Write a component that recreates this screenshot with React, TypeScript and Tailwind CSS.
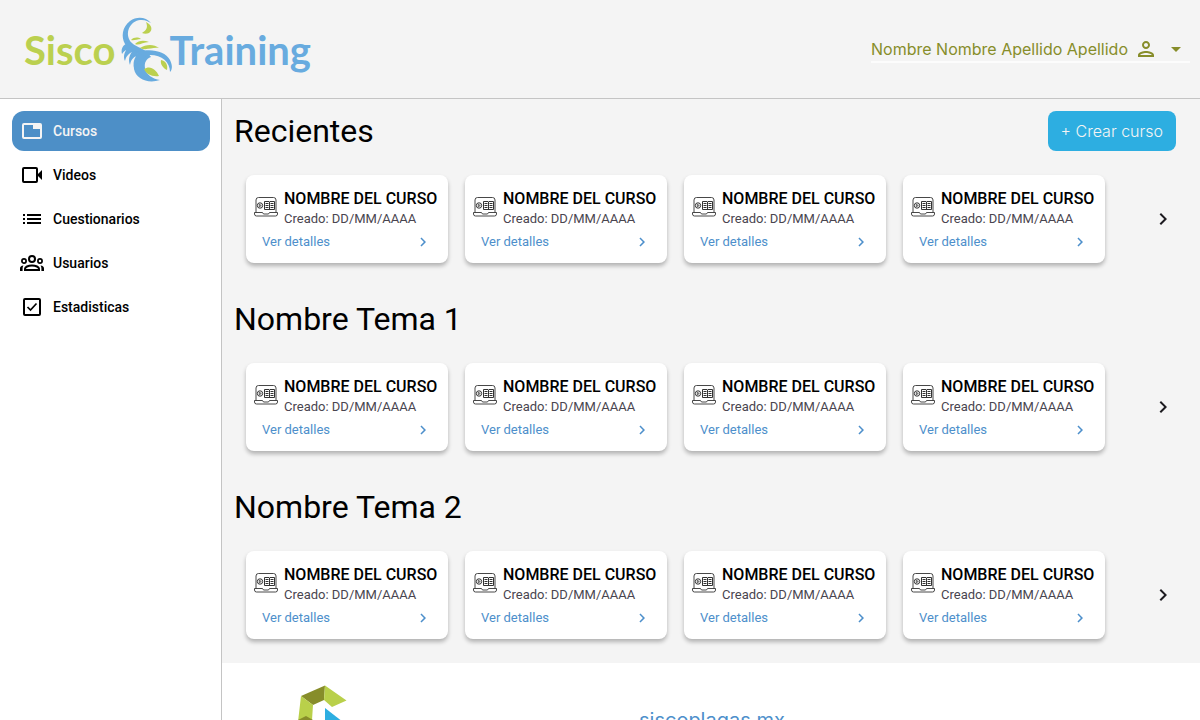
import type { ReactNode } from "react";
import { MdArrowDropDown, MdChevronRight, MdList, MdOutlinePerson } from "react-icons/md";

function ScorpionMark() {
  return (
    <svg viewBox="120 16 54 68" className="ml-1 h-[68px] w-[54px] shrink-0" aria-hidden="true">
      <g fill="#68abdf">
        <path d="M151 23C146 17 137 16 130 21C122 27 121 37 125 44C129 51 136 54 143 55C136 57 133 63 134 69C136 79 148 84 160 80C153 79 146 75 145 68C144 63 146 59 151 57C144 46 134 48 129.500 40C125 31 131 21 140 20C145 19.500 148 21 151 23Z" />
        <path d="M137 52C151 48 165 51 170 60C173 66 172 70 170 72C170 62 162 55 150 55C145 57 140 57 137 52Z" />
        <path d="M126 44C122 46 121 50 122 54C124 51 126 49 130 49ZM129 47C124 51 123 57 125 61C126 56 129 53 134 51ZM134 50C129 54 128 60 130 65C131 59 134 56 140 55ZM139 53C134 57 132 64 135 70C136 64 139 59 147 57Z" />
      </g>
      <g fill="#bbd04f">
        <path d="M146 22C152 25 153 30 149 33C147 34 144 34 142 33C147 30 148 27 146 22Z" />
        <path d="M131 40C134 37 138 37 141 39C137 39 134 41 131 40ZM135 44C139 40 144 40 149 42C143 42 139 46 135 44ZM140 48C146 44 154 44 159 48C152 47 146 51 140 48Z" />
        <path d="M144 69C150 65 156 69 159 76C152 77 146 74 144 69ZM161 60C166 61 168 65 167 70C163 68 160 64 161 60Z" />
      </g>
    </svg>
  );
}

function TabIcon() {
  return (
    <svg viewBox="0 0 24 24" className="size-6" aria-hidden="true">
      <rect x="3" y="5" width="18" height="14" rx="1" fill="none" stroke="currentColor" strokeWidth="2" />
      <path d="M13 5h8v5h-8z" fill="currentColor" />
    </svg>
  );
}

function CameraIcon() {
  return (
    <svg viewBox="0 0 24 24" className="size-6" aria-hidden="true">
      <rect x="3" y="5" width="14" height="14" rx="1" fill="none" stroke="currentColor" strokeWidth="2" />
      <path d="M18 11l4-4v10l-4-4z" fill="currentColor" />
    </svg>
  );
}

function GroupIcon() {
  return (
    <svg viewBox="0 0 24 24" className="size-6" fill="none" stroke="currentColor" aria-hidden="true">
      <circle cx="12" cy="8" r="3" strokeWidth="2" />
      <circle cx="4" cy="10" r="2.100" strokeWidth="1.700" />
      <circle cx="20" cy="10" r="2.100" strokeWidth="1.700" />
      <path d="M5 19v-1.200C5 16 8 14.500 12 14.500s7 1.500 7 3.300V19z" strokeWidth="2" />
      <path
        d="M0 20v-2.500C0 15.800 1.200 14.800 3.400 14.500C2.800 15.400 2.600 16.300 2.600 17.500V20zM24 20v-2.500c0-1.700-1.200-2.700-3.400-3c.6.9.8 1.800.8 3V20z"
        fill="currentColor"
        stroke="none"
      />
    </svg>
  );
}

function CheckSquare() {
  return (
    <svg viewBox="0 0 24 24" className="size-6" fill="none" stroke="currentColor" aria-hidden="true">
      <rect x="4" y="4" width="16" height="16" rx="1" strokeWidth="2" />
      <path d="M7.500 12l3 3 6-6.500" strokeWidth="1.700" />
    </svg>
  );
}

function CourseIcon() {
  return (
    <svg viewBox="0 0 24 20" className="h-5 w-6 shrink-0" fill="none" stroke="#333333" aria-hidden="true">
      <path d="M2 15.500V3A2.500 2.500 0 0 1 4.500.500h15A2.500 2.500 0 0 1 22 3v12.500" strokeWidth=".9" />
      <path d="M.5 15.500h8l1 1.500h5l1-1.500h8v1.500a2 2 0 0 1-2 2h-19a2 2 0 0 1-2-2z" strokeWidth=".9" />
      <circle cx="6" cy="8.500" r="2.700" strokeWidth="1" />
      <path d="M5.300 7.300v2.400l2-1.200z" strokeWidth=".8" />
      <path d="M10.500 4.500h4.500l.5.500.5-.5h4.500v8h-4.500l-.5.500-.5-.5h-4.500zM15.500 5v8" strokeWidth="1" />
      <path d="M11.500 6.500h3M11.500 8.500h3M11.500 10.500h3M16.500 6.500h3M16.500 8.500h3M16.500 10.500h3" strokeWidth="1" />
    </svg>
  );
}

function FooterMark() {
  return (
    <svg viewBox="296 685 52 60" className="h-[60px] w-[52px] shrink-0" aria-hidden="true">
      <path fill="#878d2a" d="M301 696L325 685.500L324 700L313 705Z" />
      <path fill="#b9d04a" d="M325 685.500L346.500 700.500L332 707L324 700ZM301 696L313 705L312 720L298 722Z" />
      <path fill="#878d2a" d="M298 720L306 716L313 720V732L301 737Z" />
      <path fill="#2daee1" d="M325 708L343 722L325 732Z" />
    </svg>
  );
}

const navItems: { label: string; icon: ReactNode }[] = [
  { label: "Cursos", icon: <TabIcon /> },
  { label: "Videos", icon: <CameraIcon /> },
  { label: "Cuestionarios", icon: <MdList className="size-6" /> },
  { label: "Usuarios", icon: <GroupIcon /> },
  { label: "Estadisticas", icon: <CheckSquare /> },
];

function CourseCard() {
  return (
    <article className="h-[88px] min-w-0 flex-1 rounded-lg bg-white pt-3 shadow-[0_3px_4px_rgba(0,0,0,0.27)]">
      <div className="flex gap-1.5 pl-2">
        <div className="pt-2.5">
          <CourseIcon />
        </div>
        <div className="min-w-0 whitespace-nowrap">
          <h3 className="text-base leading-6 font-medium text-black">NOMBRE DEL CURSO</h3>
          <p className="text-[13px] leading-4 text-[#49454f]">Creado: DD/MM/AAAA</p>
        </div>
      </div>
      <a href="#detalles" className="flex items-center justify-between px-4 pt-[5px] text-[13px] leading-5 text-[#4d8fcb]">
        Ver detalles
        <MdChevronRight className="size-[18px]" />
      </a>
    </article>
  );
}

function CourseSection({ title, action }: { title: string; action?: ReactNode }) {
  return (
    <section>
      <div className="flex h-10 items-center justify-between pr-6 pl-3">
        <h2 className="text-[32px] leading-10 text-black">{title}</h2>
        {action}
      </div>
      <div className="mt-6 flex items-center pr-[25px] pl-6">
        <div className="flex min-w-0 flex-1 gap-[17px]">
          {[0, 1, 2, 3].map((i) => (
            <CourseCard key={i} />
          ))}
        </div>
        <button type="button" aria-label={"Siguiente: " + title} className="ml-[46px] text-[#1d1b20]">
          <MdChevronRight className="size-6" />
        </button>
      </div>
    </section>
  );
}

export default function App() {
  return (
    <div className="flex h-screen flex-col bg-white font-['Roboto',sans-serif]">
      <header className="flex shrink-0 items-center justify-between border-b border-[#c4c4c4] bg-[#f4f4f4] pt-4 pr-2.5 pb-3.5 pl-6">
        <a
          href="#inicio"
          className="flex items-center font-['Lato',sans-serif] text-[40px] leading-none font-bold"
          aria-label="Sisco Training"
        >
          <span className="text-[#bbd04f]">Sisco</span>
          <ScorpionMark />
          <span className="-ml-1 text-[#68abdf]">Training</span>
        </a>
        <button
          type="button"
          className="flex items-center border-b-2 border-white/70 font-['Inter',sans-serif] text-base leading-6 text-[#878d2a]"
        >
          Nombre Nombre Apellido Apellido
          <MdOutlinePerson className="ml-1.5 size-6" />
          <MdArrowDropDown className="mr-0.5 ml-1.5 size-6" />
        </button>
      </header>
      <div className="flex min-h-0 flex-1">
        <nav className="w-[222px] shrink-0 border-r border-[#c4c4c4] bg-white py-3 pr-[11px] pl-3">
          <ul className="flex flex-col gap-1">
            {navItems.map((item, i) => (
              <li key={item.label}>
                <a
                  href={"#" + item.label.toLowerCase()}
                  className={
                    i === 0
                      ? "flex h-10 items-center gap-[9px] rounded-xl bg-[#4d8fc7] px-2 text-sm font-medium text-[#f4f4f4]"
                      : "flex h-10 items-center gap-[9px] rounded-xl px-2 text-sm font-medium text-black"
                  }
                >
                  {item.icon}
                  {item.label}
                </a>
              </li>
            ))}
          </ul>
        </nav>
        <div className="min-w-0 flex-1 overflow-y-auto [scrollbar-width:none]">
          <main className="flex flex-col gap-9 bg-[#f4f4f4] pt-3 pb-6">
            <CourseSection
              title="Recientes"
              action={
                <button
                  type="button"
                  className="h-10 rounded-lg bg-[#2daee1] px-[13px] font-['Inter',sans-serif] text-base font-light text-[#f4f4f4]"
                >
                  + Crear curso
                </button>
              }
            />
            <CourseSection title="Nombre Tema 1" />
            <CourseSection title="Nombre Tema 2" />
          </main>
          <footer className="flex items-start pt-[22px] pb-6 pl-[74px]">
            <FooterMark />
            <a
              href="#siscoplagas"
              className="mt-[21px] ml-[291px] font-['Inter',sans-serif] text-xl leading-7 text-[#4d8fcb]"
            >
              siscoplagas.mx
            </a>
          </footer>
        </div>
      </div>
    </div>
  );
}
